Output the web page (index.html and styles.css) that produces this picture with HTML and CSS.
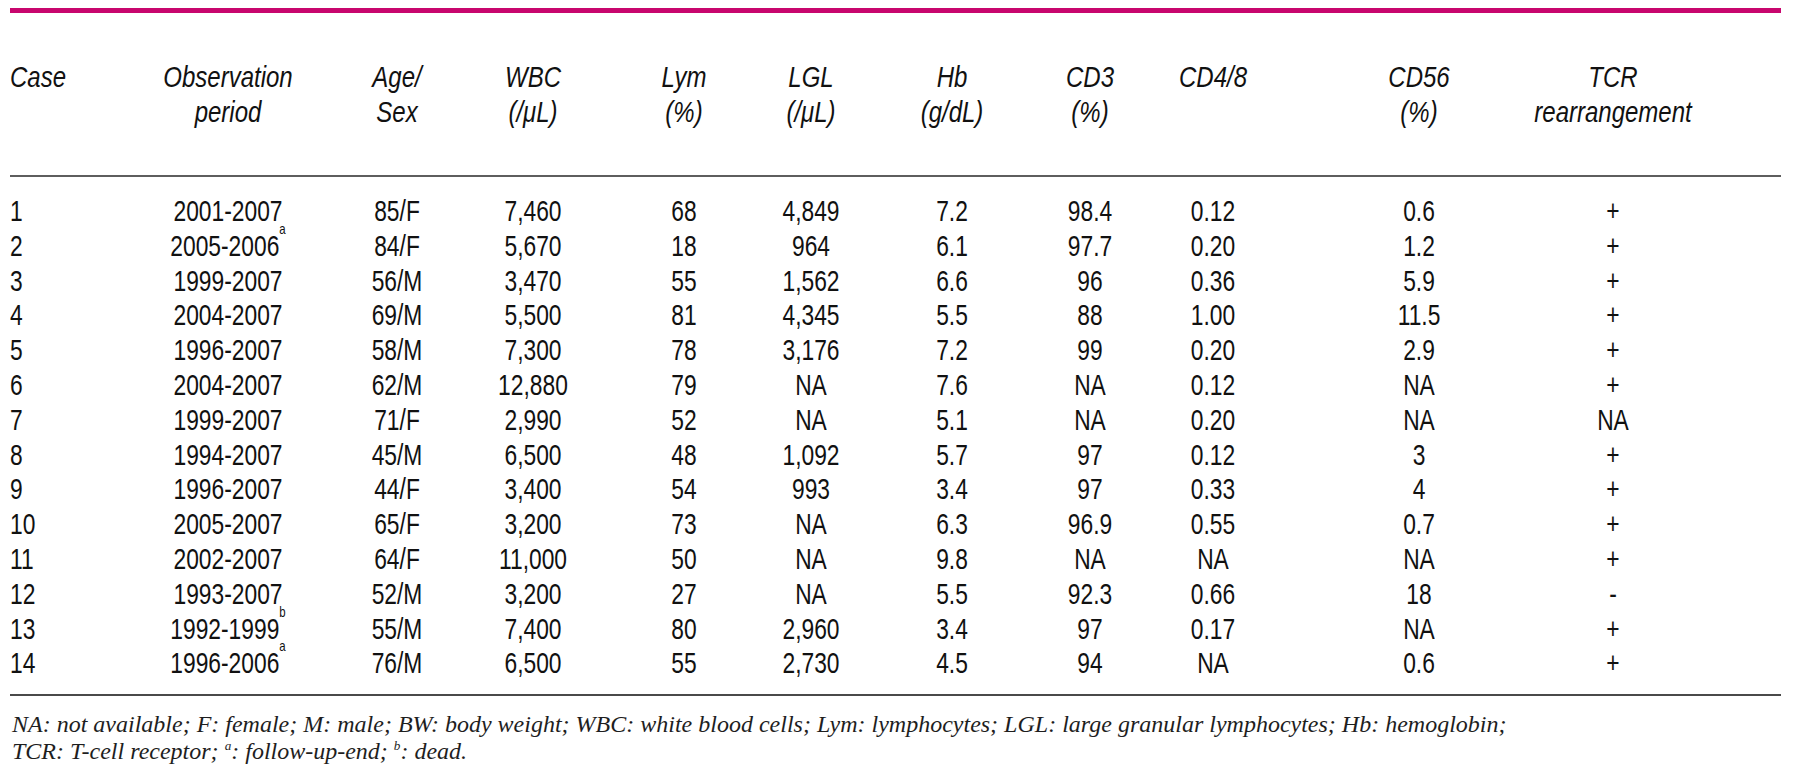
FILE: index.html
```html
<!DOCTYPE html>
<html lang="en">
<head>
<meta charset="utf-8">
<title>Table</title>
<link rel="stylesheet" href="styles.css">
</head>
<body>
<div class="page">
  <div class="rule-top"></div>
  <div class="row head">
    <div class="c left"><span>Case</span></div>
    <div class="c"><span>Observation<br>period</span></div>
    <div class="c"><span>Age/<br>Sex</span></div>
    <div class="c"><span>WBC<br>(/μL)</span></div>
    <div class="c"><span>Lym<br>(%)</span></div>
    <div class="c"><span>LGL<br>(/μL)</span></div>
    <div class="c"><span>Hb<br>(g/dL)</span></div>
    <div class="c"><span>CD3<br>(%)</span></div>
    <div class="c"><span>CD4/8</span></div>
    <div class="c"><span>CD56<br>(%)</span></div>
    <div class="c"><span>TCR<br>rearrangement</span></div>
    <div class="c"></div>
  </div>
  <div class="rule-mid"></div>
  <div class="body">
    <div class="row"><div class="c left">1</div><div class="c">2001-2007</div><div class="c">85/F</div><div class="c">7,460</div><div class="c">68</div><div class="c">4,849</div><div class="c">7.2</div><div class="c">98.4</div><div class="c">0.12</div><div class="c">0.6</div><div class="c">+</div><div class="c"></div></div>
    <div class="row"><div class="c left">2</div><div class="c">2005-2006<sup>a</sup></div><div class="c">84/F</div><div class="c">5,670</div><div class="c">18</div><div class="c">964</div><div class="c">6.1</div><div class="c">97.7</div><div class="c">0.20</div><div class="c">1.2</div><div class="c">+</div><div class="c"></div></div>
    <div class="row"><div class="c left">3</div><div class="c">1999-2007</div><div class="c">56/M</div><div class="c">3,470</div><div class="c">55</div><div class="c">1,562</div><div class="c">6.6</div><div class="c">96</div><div class="c">0.36</div><div class="c">5.9</div><div class="c">+</div><div class="c"></div></div>
    <div class="row"><div class="c left">4</div><div class="c">2004-2007</div><div class="c">69/M</div><div class="c">5,500</div><div class="c">81</div><div class="c">4,345</div><div class="c">5.5</div><div class="c">88</div><div class="c">1.00</div><div class="c">11.5</div><div class="c">+</div><div class="c"></div></div>
    <div class="row"><div class="c left">5</div><div class="c">1996-2007</div><div class="c">58/M</div><div class="c">7,300</div><div class="c">78</div><div class="c">3,176</div><div class="c">7.2</div><div class="c">99</div><div class="c">0.20</div><div class="c">2.9</div><div class="c">+</div><div class="c"></div></div>
    <div class="row"><div class="c left">6</div><div class="c">2004-2007</div><div class="c">62/M</div><div class="c">12,880</div><div class="c">79</div><div class="c">NA</div><div class="c">7.6</div><div class="c">NA</div><div class="c">0.12</div><div class="c">NA</div><div class="c">+</div><div class="c"></div></div>
    <div class="row"><div class="c left">7</div><div class="c">1999-2007</div><div class="c">71/F</div><div class="c">2,990</div><div class="c">52</div><div class="c">NA</div><div class="c">5.1</div><div class="c">NA</div><div class="c">0.20</div><div class="c">NA</div><div class="c">NA</div><div class="c"></div></div>
    <div class="row"><div class="c left">8</div><div class="c">1994-2007</div><div class="c">45/M</div><div class="c">6,500</div><div class="c">48</div><div class="c">1,092</div><div class="c">5.7</div><div class="c">97</div><div class="c">0.12</div><div class="c">3</div><div class="c">+</div><div class="c"></div></div>
    <div class="row"><div class="c left">9</div><div class="c">1996-2007</div><div class="c">44/F</div><div class="c">3,400</div><div class="c">54</div><div class="c">993</div><div class="c">3.4</div><div class="c">97</div><div class="c">0.33</div><div class="c">4</div><div class="c">+</div><div class="c"></div></div>
    <div class="row"><div class="c left">10</div><div class="c">2005-2007</div><div class="c">65/F</div><div class="c">3,200</div><div class="c">73</div><div class="c">NA</div><div class="c">6.3</div><div class="c">96.9</div><div class="c">0.55</div><div class="c">0.7</div><div class="c">+</div><div class="c"></div></div>
    <div class="row"><div class="c left">11</div><div class="c">2002-2007</div><div class="c">64/F</div><div class="c">11,000</div><div class="c">50</div><div class="c">NA</div><div class="c">9.8</div><div class="c">NA</div><div class="c">NA</div><div class="c">NA</div><div class="c">+</div><div class="c"></div></div>
    <div class="row"><div class="c left">12</div><div class="c">1993-2007</div><div class="c">52/M</div><div class="c">3,200</div><div class="c">27</div><div class="c">NA</div><div class="c">5.5</div><div class="c">92.3</div><div class="c">0.66</div><div class="c">18</div><div class="c">-</div><div class="c"></div></div>
    <div class="row"><div class="c left">13</div><div class="c">1992-1999<sup>b</sup></div><div class="c">55/M</div><div class="c">7,400</div><div class="c">80</div><div class="c">2,960</div><div class="c">3.4</div><div class="c">97</div><div class="c">0.17</div><div class="c">NA</div><div class="c">+</div><div class="c"></div></div>
    <div class="row"><div class="c left">14</div><div class="c">1996-2006<sup>a</sup></div><div class="c">76/M</div><div class="c">6,500</div><div class="c">55</div><div class="c">2,730</div><div class="c">4.5</div><div class="c">94</div><div class="c">NA</div><div class="c">0.6</div><div class="c">+</div><div class="c"></div></div>
  </div>
  <div class="rule-bottom"></div>
  <div class="notes">
    <p>NA: not available; F: female; M: male; BW: body weight; WBC: white blood cells; Lym: lymphocytes; LGL: large granular lymphocytes; Hb: hemoglobin;</p>
    <p>TCR: T-cell receptor; <sup>a</sup>: follow-up-end; <sup>b</sup>: dead.</p>
  </div>
</div>
</body>
</html>
```
FILE: styles.css
```css
html, body {
  margin: 0;
  padding: 0;
  background: #ffffff;
}

.page {
  width: 1771px;
  margin-left: 10px;
  color: #111111;
  font-family: "Liberation Sans", Arial, sans-serif;
  font-size: 30px;
}

.rule-top {
  margin-top: 8px;
  height: 5px;
  background: #c8066e;
}

.row {
  display: grid;
  grid-template-columns: 120px 196px 142px 130px 172px 82px 200px 76px 170px 242px 146px 1fr;
}

.c {
  display: flex;
  justify-content: center;
  white-space: nowrap;
  text-align: center;
  transform: scaleX(0.76);
  transform-origin: center center;
}

.c.left {
  justify-content: flex-start;
  text-align: left;
  transform-origin: left center;
}

.head {
  margin-top: 46px;
  padding-bottom: 46px;
  font-style: italic;
  line-height: 35px;
}

.head .c {
  transform: scaleX(0.8);
}

.rule-mid {
  height: 2px;
  background: #5e5e5e;
}

.body {
  padding-top: 17px;
  line-height: 34.8px;
}

sup {
  font-size: 0.5em;
  line-height: 0;
  vertical-align: 0.95em;
}

.rule-bottom {
  margin-top: 13px;
  height: 2px;
  background: #4a4a4a;
}

.notes {
  padding-top: 15px;
  font-family: "Liberation Serif", "Times New Roman", serif;
  font-style: italic;
  font-size: 24px;
  line-height: 26.5px;
  color: #1e1e1e;
}

.notes p {
  margin: 0;
  padding-left: 2px;
}

.notes sup {
  font-size: 0.55em;
  vertical-align: 0.7em;
}
```
